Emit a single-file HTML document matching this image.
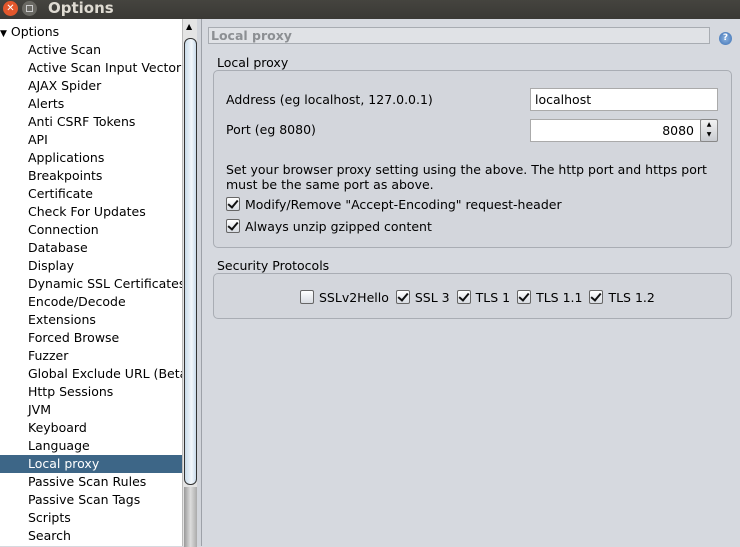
<!DOCTYPE html>
<html><head><style>
*{margin:0;padding:0;box-sizing:border-box}
body{width:740px;height:546px;overflow:hidden;background:#d6d9df;font-family:"DejaVu Sans","Liberation Sans",sans-serif;font-size:12.5px;color:#000;position:relative}
.a{position:absolute;white-space:nowrap}
#title{left:0;top:0;width:740px;height:19px;background:linear-gradient(#45443f,#3a3935);}
#tree{left:0;top:19px;width:182px;height:527px;background:#fff}
.r{position:absolute;left:28px;height:18px;line-height:18px;margin-top:1px}
#sb{left:182px;top:19px;width:15px;height:527px;background:#e4e4e4;border-left:1px solid #bbb}
.cb{display:inline-block;width:14px;height:14px;border:1px solid #666;border-radius:2px;background:linear-gradient(#fff,#d8dce2);vertical-align:-2px;position:relative;margin-right:5px}
.cb.c:after{content:"";position:absolute;left:3px;top:0px;width:4px;height:8px;border:solid #111;border-width:0 2px 2px 0;transform:rotate(40deg)}
.grp{border:1px solid #a9adb4;border-radius:5px;background:#d3d6dc}
.sp{margin-right:3px}
</style></head><body>
<div class="a" id="title">
<div class="a" style="left:3px;top:1px;width:15px;height:15px;border-radius:50%;background:#e2572c;color:#fff;font-size:10px;text-align:center;line-height:15px">✕</div>
<div class="a" style="left:22px;top:1px;width:15px;height:15px;border-radius:50%;background:#6a6963;"><div class="a" style="left:4px;top:4px;width:7px;height:7px;border:1px solid #ccc"></div></div>
<div class="a" style="left:48px;top:-1px;color:#dfdbd2;font-weight:bold;font-size:15px">Options</div>
</div>
<div class="a" id="tree">
<div class="r" style="left:0;top:3px"><span style="font-size:9px">▼</span> Options</div>
<div class="r" style="top:21px">Active Scan</div>
<div class="r" style="top:39px">Active Scan Input Vector</div>
<div class="r" style="top:57px">AJAX Spider</div>
<div class="r" style="top:75px">Alerts</div>
<div class="r" style="top:93px">Anti CSRF Tokens</div>
<div class="r" style="top:111px">API</div>
<div class="r" style="top:129px">Applications</div>
<div class="r" style="top:147px">Breakpoints</div>
<div class="r" style="top:165px">Certificate</div>
<div class="r" style="top:183px">Check For Updates</div>
<div class="r" style="top:201px">Connection</div>
<div class="r" style="top:219px">Database</div>
<div class="r" style="top:237px">Display</div>
<div class="r" style="top:255px">Dynamic SSL Certificates</div>
<div class="r" style="top:273px">Encode/Decode</div>
<div class="r" style="top:291px">Extensions</div>
<div class="r" style="top:309px">Forced Browse</div>
<div class="r" style="top:327px">Fuzzer</div>
<div class="r" style="top:345px">Global Exclude URL (Beta</div>
<div class="r" style="top:363px">Http Sessions</div>
<div class="r" style="top:381px">JVM</div>
<div class="r" style="top:399px">Keyboard</div>
<div class="r" style="top:417px">Language</div>
<div class="a" style="left:0;top:436px;width:182px;height:18px;background:#3d6687"></div>
<div class="r" style="top:435px;color:#fff">Local proxy</div>
<div class="r" style="top:453px">Passive Scan Rules</div>
<div class="r" style="top:471px">Passive Scan Tags</div>
<div class="r" style="top:489px">Scripts</div>
<div class="r" style="top:507px">Search</div>
</div>
<div class="a" id="sb">
<div class="a" style="left:3px;top:3px;font-size:8px">▲</div>
<div class="a" style="left:1px;top:19px;width:13px;height:447px;border:1px solid #333;border-radius:6px;background:linear-gradient(90deg,#c9dbea,#f3f7fb 60%,#c9dbea)"></div>
<div class="a" style="left:1px;top:468px;width:13px;height:60px;background:linear-gradient(90deg,#999,#ddd,#aaa)"></div>
</div>
<div class="a" style="left:197px;top:19px;width:5px;height:527px;background:#d2d5db;border-right:1px solid #9da1a8"></div>
<div class="a" style="left:208px;top:27px;width:502px;height:17px;border:1px solid #a8acb2;background:#e0e2e6;color:#8c8f93;font-weight:bold;font-size:12.5px;line-height:15px;padding-left:2px">Local proxy</div>
<div class="a" style="left:719px;top:32px;width:13px;height:13px;border-radius:50%;background:radial-gradient(#8fb4e0,#3a6fb3);color:#fff;font-size:9px;font-weight:bold;text-align:center;line-height:13px">?</div>
<div class="a" style="left:217px;top:55px">Local proxy</div>
<div class="a grp" style="left:213px;top:70px;width:519px;height:178px"></div>
<div class="a" style="left:226px;top:92px">Address (eg localhost, 127.0.0.1)</div>
<div class="a" style="left:530px;top:88px;width:188px;height:23px;background:#fff;border:1px solid #aaa;padding:3px 4px">localhost</div>
<div class="a" style="left:226px;top:122px">Port (eg 8080)</div>
<div class="a" style="left:530px;top:119px;width:171px;height:23px;background:#fff;border:1px solid #aaa;text-align:right;padding:3px 6px">8080</div>
<div class="a" style="left:700px;top:119px;width:18px;height:23px;border:1px solid #888;border-radius:2px;background:linear-gradient(#f2f2f2,#c9ccd1);font-size:6px;text-align:center;line-height:10px">▲<br>▼</div>
<div class="a" style="left:226px;top:162px;line-height:15px">Set your browser proxy setting using the above. The http port and https port<br>must be the same port as above.</div>
<div class="a" style="left:226px;top:197px"><span class="cb c"></span>Modify/Remove "Accept-Encoding" request-header</div>
<div class="a" style="left:226px;top:219px"><span class="cb c"></span>Always unzip gzipped content</div>
<div class="a" style="left:217px;top:258px">Security Protocols</div>
<div class="a grp" style="left:213px;top:273px;width:519px;height:46px"></div>
<div class="a" style="left:300px;top:290px"><span class="cb"></span><span class="sp">SSLv2Hello</span> <span class="cb c"></span><span class="sp">SSL 3</span> <span class="cb c"></span><span class="sp">TLS 1</span> <span class="cb c"></span><span class="sp">TLS 1.1</span> <span class="cb c"></span>TLS 1.2</div>
</body></html>
